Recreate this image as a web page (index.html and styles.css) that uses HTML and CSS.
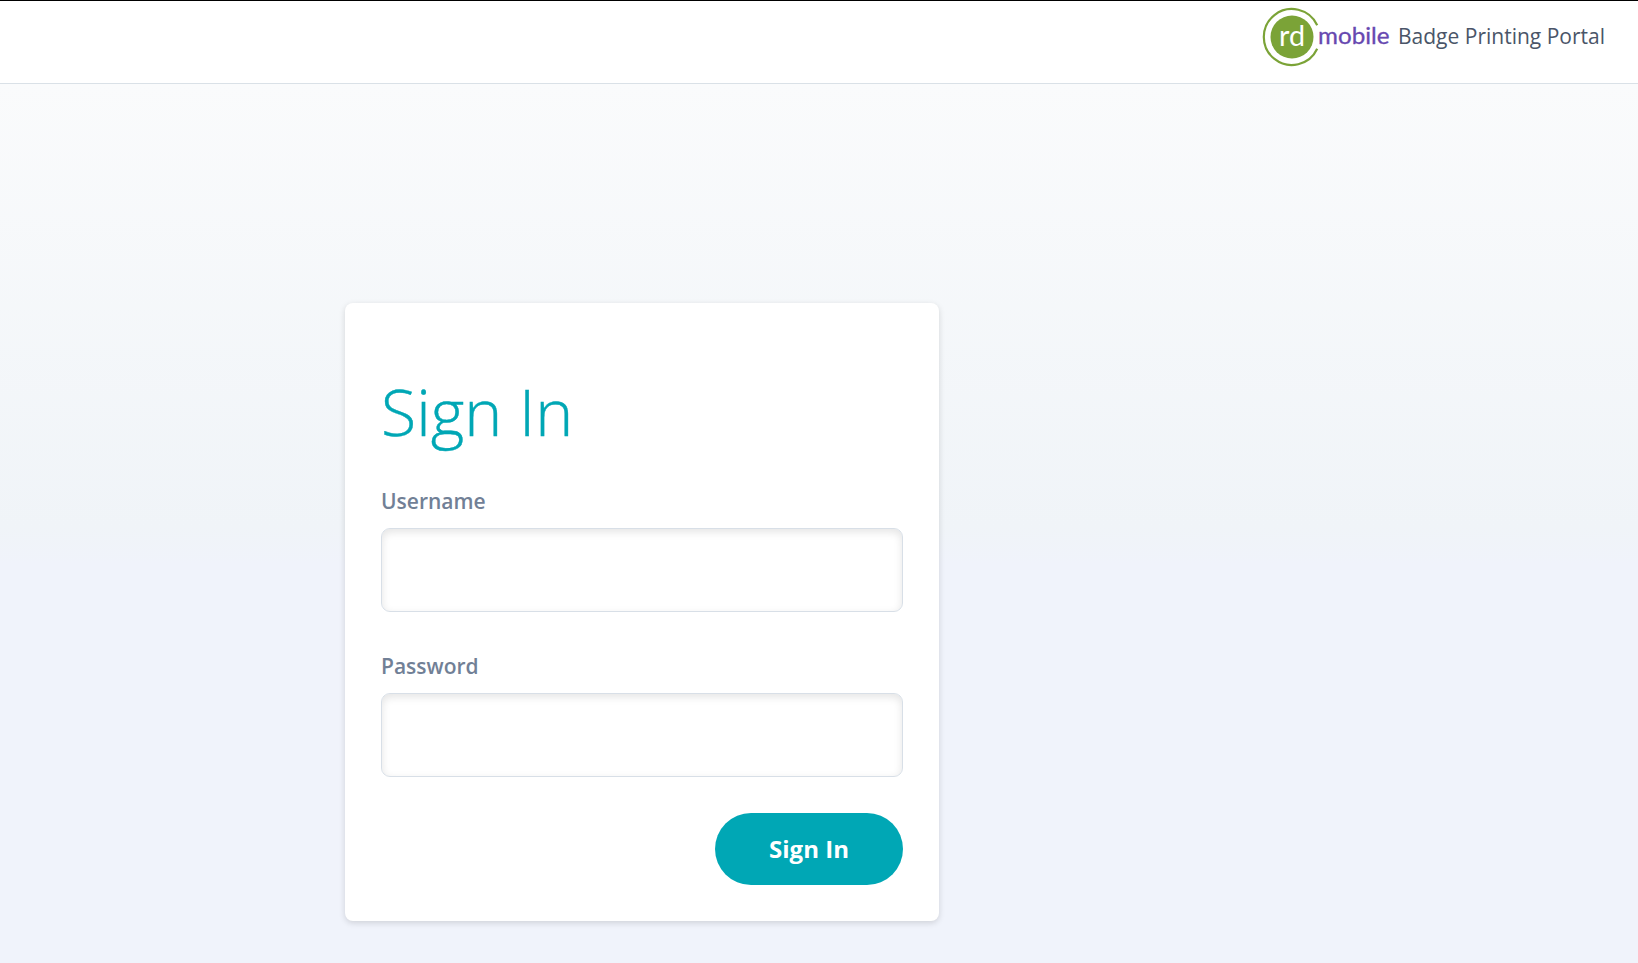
FILE: index.html
```html
<!DOCTYPE html>
<html lang="en">
<head>
  <meta charset="UTF-8" />
  <meta name="viewport" content="width=device-width, initial-scale=1.0"/>
  <title>Badge Printing Portal</title>
  <link rel="stylesheet" href="styles.css">
</head>
<body>
  <header class="topbar">
    <svg class="logo" width="130" height="60" viewBox="0 0 130 60" role="img" aria-label="rd mobile">
      <circle class="logo-disc" cx="32" cy="30" r="21.5"/>
      <path class="logo-ring" d="M57.2 18.2 A28 28 0 1 0 57.2 41.8"/>
      <text class="logo-rd" x="19" y="38.5" textLength="26" lengthAdjust="spacingAndGlyphs">rd</text>
      <text class="logo-mobile" x="58" y="36.5" textLength="71.5" lengthAdjust="spacingAndGlyphs">mobile</text>
    </svg>
    <span class="portal">Badge Printing Portal</span>
  </header>

  <main class="page">
    <form class="card">
      <h1 class="title">Sign In</h1>
      <label class="label" for="username">Username</label>
      <input class="field" type="text" id="username">
      <label class="label" for="password">Password</label>
      <input class="field" type="password" id="password">
      <button class="sign-in" type="button">Sign In</button>
    </form>
  </main>
</body>
</html>
```
FILE: styles.css
```css
* {
  margin: 0;
  padding: 0;
  box-sizing: border-box;
  font-family: 'Open Sans', sans-serif;
}

body {
  height: 100vh;
  display: flex;
  flex-direction: column;
  overflow: hidden;
}

.topbar {
  display: flex;
  align-items: flex-start;
  justify-content: flex-end;
  height: 84px;
  padding: 6px 33px 0 0;
  background: #fff;
  border-top: 1px solid #000;
  border-bottom: 1px solid #dae1e7;
}

.logo-disc {
  fill: #7ba337;
}

.logo-ring {
  fill: none;
  stroke: #7ba337;
  stroke-width: 2.2;
}

.logo-rd {
  font-family: 'Lato', sans-serif;
  font-size: 28px;
  fill: #fff;
}

.logo-mobile {
  font-family: 'Lato', sans-serif;
  font-size: 23px;
  fill: #6748b0;
  stroke: #6748b0;
  stroke-width: 0.3;
}

.portal {
  margin-left: 8px;
  font-size: 21px;
  line-height: 58px;
  color: #4a5568;
}

.page {
  flex: 1;
  padding: 219px 0 0 345px;
  background: linear-gradient(#fafbfc, #f0f4f8 443px, #f0f3fb 480px);
}

.card {
  display: flex;
  flex-direction: column;
  width: 594px;
  height: 618px;
  padding: 63px 36px 36px;
  background: #fff;
  border-radius: 8px;
  box-shadow: 0 2px 6px rgba(0, 0, 0, 0.14);
}

.title {
  margin-bottom: 30px;
  font-size: 64.5px;
  font-weight: 300;
  line-height: 90px;
  color: #00a7b5;
  -webkit-text-stroke: 0.4px #00a7b5;
}

.label {
  margin-bottom: 12px;
  font-size: 21px;
  font-weight: 600;
  line-height: 30px;
  color: #718096;
}

.field {
  height: 84px;
  margin-bottom: 39px;
  padding: 0 24px;
  font-size: 24px;
  border: 1px solid #d8dfe7;
  border-radius: 9px;
  box-shadow: inset 0 3px 8px rgba(0, 0, 0, 0.11);
}

.sign-in {
  align-self: flex-end;
  width: 188px;
  height: 72px;
  margin-top: -3px;
  padding-bottom: 2px;
  font-size: 24px;
  font-weight: 700;
  color: #fff;
  background: #00a7b5;
  border: none;
  border-radius: 36px;
  cursor: pointer;
}
```
